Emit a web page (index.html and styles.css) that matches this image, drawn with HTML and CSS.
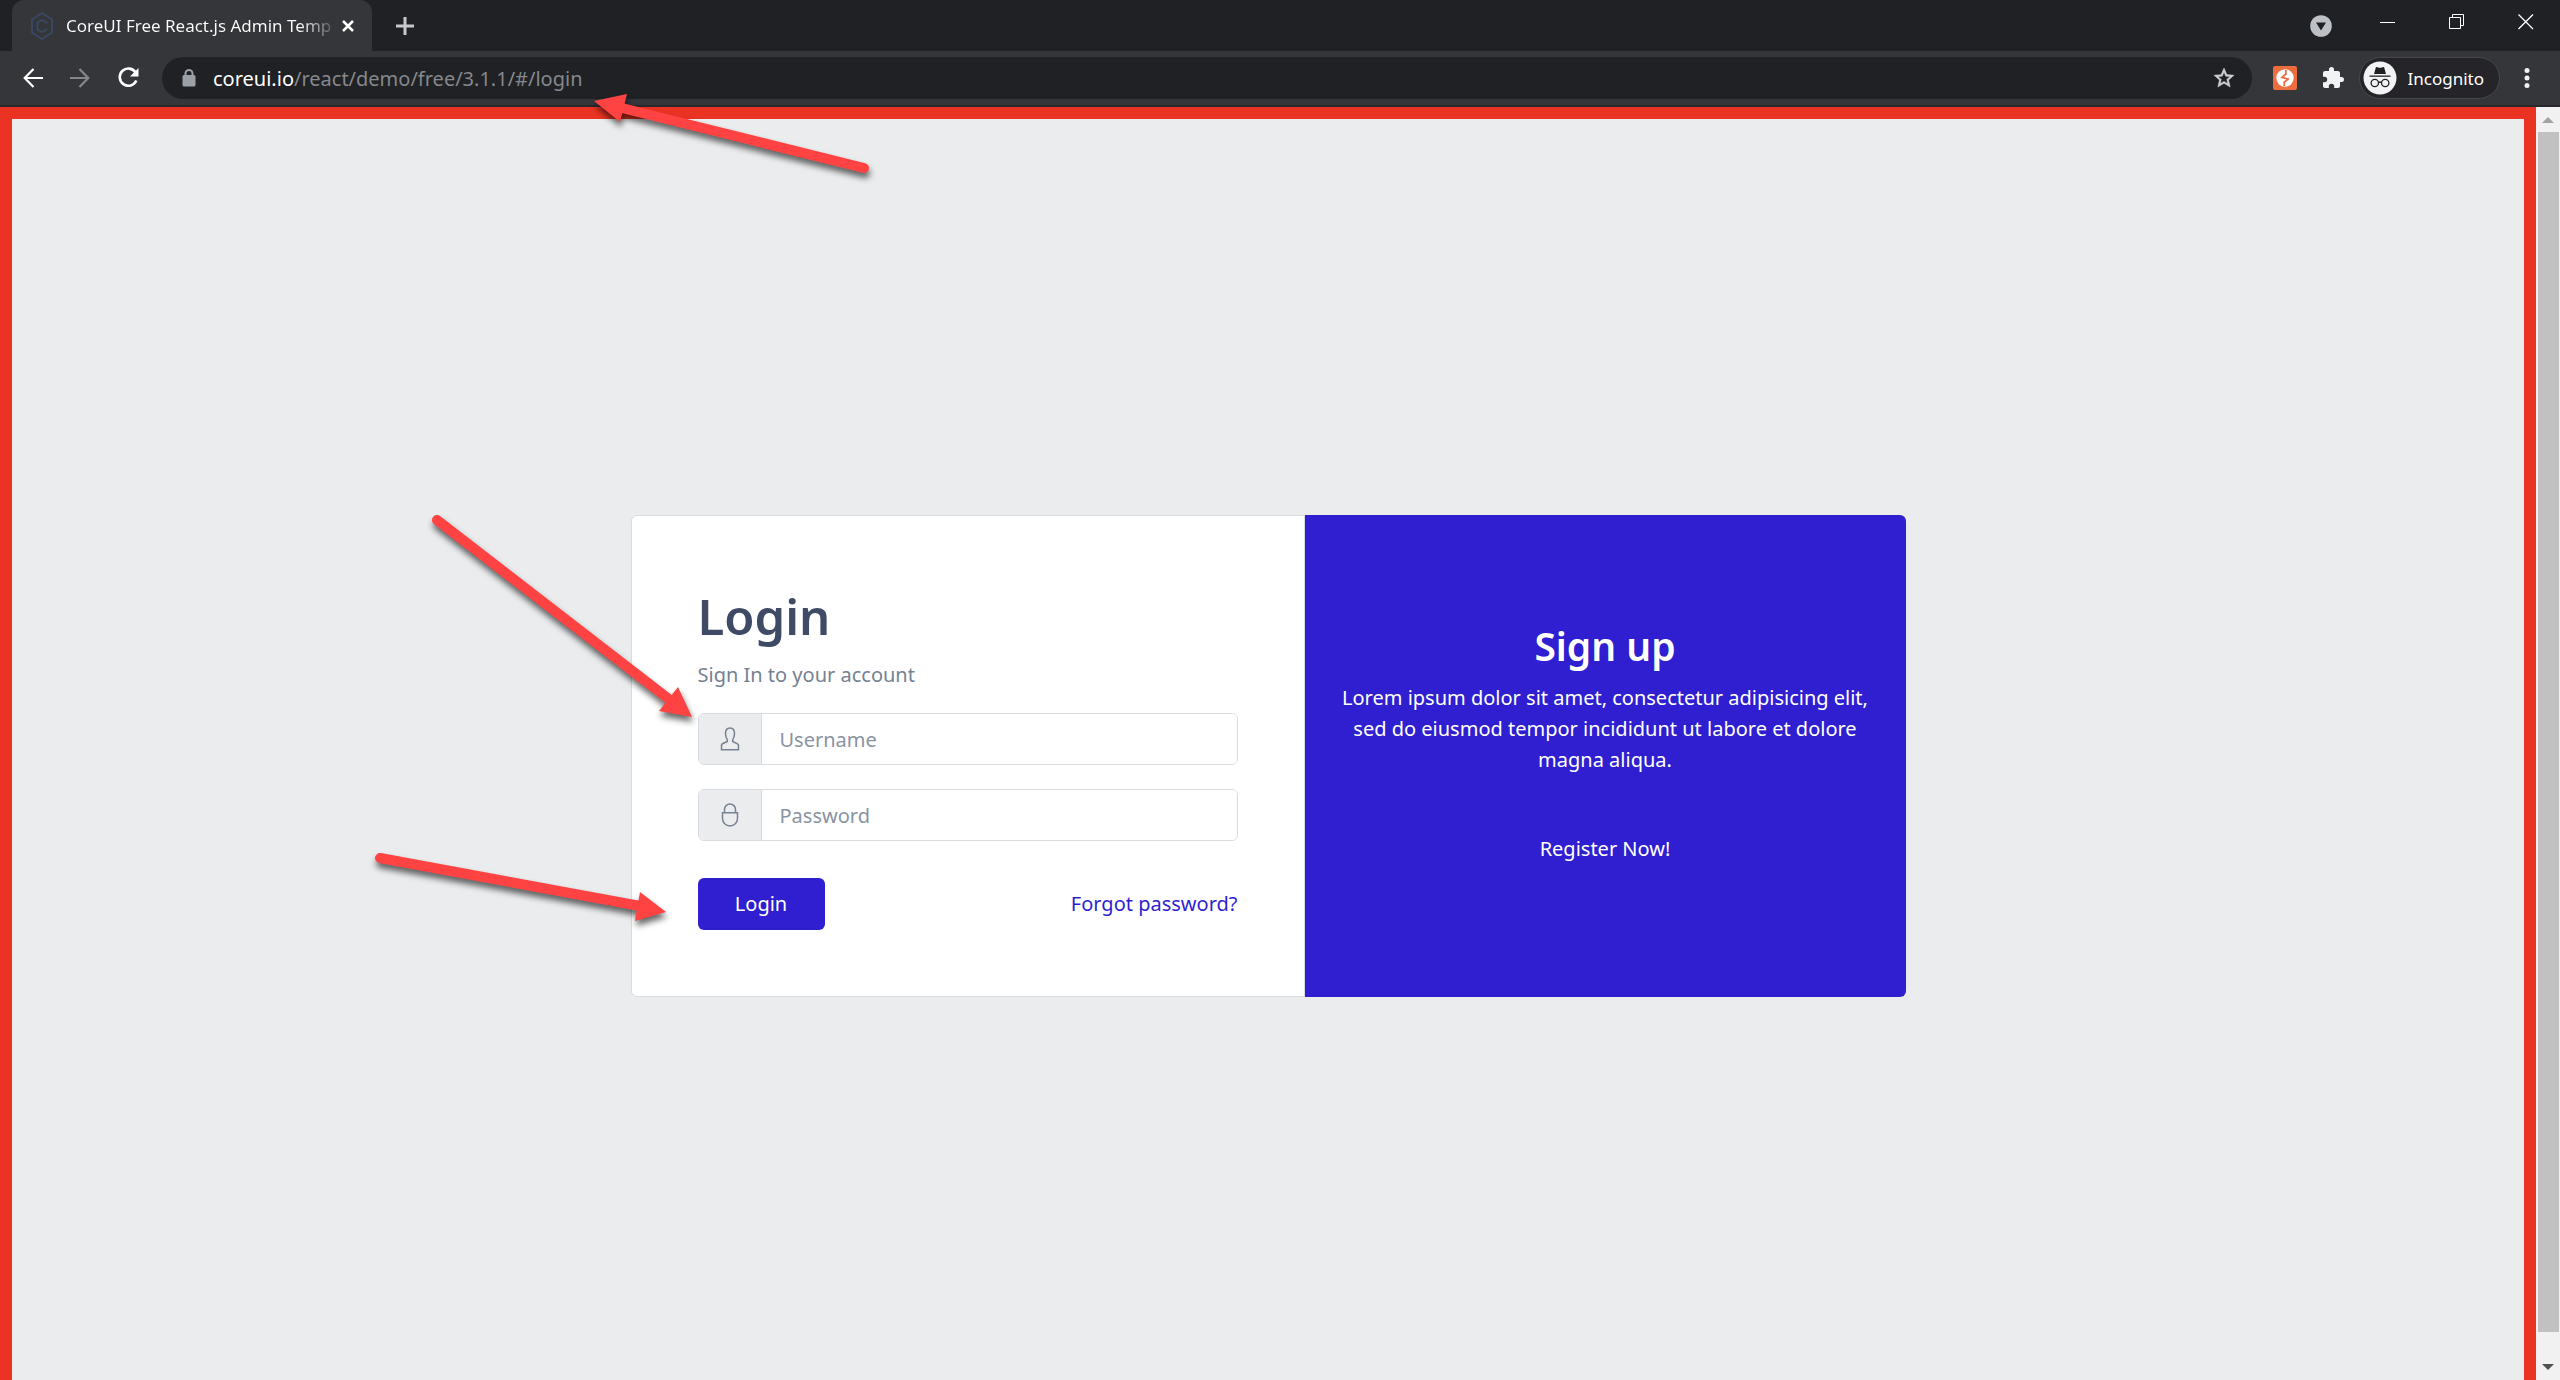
FILE: index.html
```html
<!DOCTYPE html>
<html lang="en">
<head>
<meta charset="utf-8">
<title>CoreUI Free React.js Admin Template</title>
<link rel="stylesheet" href="styles.css">
</head>
<body>
<header class="browser">
  <div class="tab-strip">
    <div class="tab">
      <svg class="favicon" width="24" height="30" viewBox="0 0 24 30" fill="none" stroke="#3a4763" stroke-width="2"><path d="M12 2 22 8.500V21.500L12 28 2 21.500V8.500Z"/><path d="M16.500 12.500V11.500L12 8.800 7.500 11.500V18.500L12 21.200 16.500 18.500V17.500"/></svg>
      <span class="tab-title">CoreUI Free React.js Admin Temp</span>
      <button class="icon-button tab-close" aria-label="Close tab"><svg width="14" height="14" viewBox="0 0 14 14" stroke="#fff" stroke-width="2.500"><path d="M2 2 12 12M12 2 2 12"/></svg></button>
    </div>
    <button class="icon-button new-tab" aria-label="New tab"><svg width="18" height="18" viewBox="0 0 18 18" stroke="#c5c8cc" stroke-width="3"><path d="M9 0V18M0 9H18"/></svg></button>
    <div class="window-controls">
      <button class="icon-button" aria-label="Search tabs"><svg width="22" height="22" viewBox="0 0 22 22"><circle cx="11" cy="11" r="10.800" fill="#bdc1c6"/><path d="M6 7.500H16L11 15.500Z" fill="#202124"/></svg></button>
      <button class="icon-button caption" aria-label="Minimize"><svg width="16" height="16" viewBox="0 0 16 16" stroke="#fff"><path d="M0 8.500H15"/></svg></button>
      <button class="icon-button caption" aria-label="Restore"><svg width="16" height="16" viewBox="0 0 16 16" fill="none" stroke="#fff"><path d="M.5 3.500H11.500V14.500H.5ZM3.500 3.500V.5H14.500V11.500H11.500"/></svg></button>
      <button class="icon-button caption" aria-label="Close"><svg width="16" height="16" viewBox="0 0 16 16" stroke="#fff" stroke-width="1.300"><path d="M.5 .5 15 15M15 .5 .5 15"/></svg></button>
    </div>
  </div>
  <div class="toolbar">
    <nav class="nav-buttons">
      <button class="icon-button" aria-label="Back"><svg width="20" height="20" viewBox="0 0 20 20" fill="none" stroke="#fff" stroke-width="2.200"><path d="M20 10H2M10.500 1 1.700 10 10.500 19"/></svg></button>
      <button class="icon-button" aria-label="Forward"><svg width="20" height="20" viewBox="0 0 20 20" fill="none" stroke="#85878b" stroke-width="2.200"><path d="M0 10H18M9.500 1 18.300 10 9.500 19"/></svg></button>
      <button class="icon-button" aria-label="Reload"><svg width="22" height="22" viewBox="0 0 22 22" fill="none" stroke="#fff" stroke-width="2.600"><path d="M18.800 5.800A8.600 8.600 0 1 0 19.300 13.500"/><path d="M21.500 1V9.500H13Z" fill="#fff" stroke="none"/></svg></button>
    </nav>
    <div class="omnibox">
      <svg width="14" height="18" viewBox="0 0 14 18"><path d="M3.500 7V4.500A3.500 3.500 0 0 1 10.500 4.500V7" fill="none" stroke="#9aa0a6" stroke-width="2"/><rect x=".5" y="6" width="13" height="11.500" rx="1.500" fill="#9aa0a6"/></svg>
      <a class="url" href="#/login"><span class="url-host">coreui.io</span>/react/demo/free/3.1.1/#/login</a>
      <button class="icon-button" aria-label="Bookmark this tab"><svg width="24" height="24" viewBox="0 0 24 24" fill="#d0d2d5"><path d="M22 9.240l-7.190-.62L12 2 9.190 8.630 2 9.240l5.460 4.730L5.820 21 12 17.270 18.180 21l-1.630-7.030L22 9.240zM12 15.400l-3.760 2.270 1-4.280-3.320-2.880 4.380-.38L12 6.100l1.710 4.040 4.380.38-3.320 2.880 1 4.280L12 15.400z" stroke="#d0d2d5" stroke-width=".5"/></svg></button>
    </div>
    <div class="extensions">
      <button class="icon-button" aria-label="Extension"><svg width="24" height="24" viewBox="0 0 24 24"><rect width="24" height="24" rx="2" fill="#ee6d3f"/><circle cx="12" cy="12" r="8.700" fill="#fff"/><path d="M12.800 4V8.200L9 11.300 15 13.200 11.200 16.300V20" fill="none" stroke="#ee6d3f" stroke-width="1.800"/></svg></button>
      <button class="icon-button" aria-label="Extensions"><svg width="24" height="24" viewBox="0 0 24 24" fill="#f1f3f4"><path d="M20.500 11H19V7c0-1.100-.9-2-2-2h-4V3.500a2.500 2.500 0 0 0-5 0V5H4c-1.100 0-2 .9-2 2v3.800h1.500a2.700 2.700 0 0 1 0 5.400H2V20c0 1.100.9 2 2 2h3.800v-1.500a2.700 2.700 0 0 1 5.400 0V22H17c1.100 0 2-.9 2-2v-4h1.500a2.500 2.500 0 0 0 0-5z"/></svg></button>
    </div>
    <button class="profile">
      <svg width="34" height="34" viewBox="0 0 34 34"><circle cx="17" cy="17" r="16.500" fill="#f1f3f4"/><g fill="#202124"><path d="M12.800 6.500Q13 6 13.500 6.100L17 7 20.500 6.100Q21 6 21.200 6.500L23 13H11Z"/><path d="M6.500 14.500H27.500V15.800H6.500Z"/></g><g fill="none" stroke="#202124" stroke-width="1.300"><circle cx="11.800" cy="22" r="3.700"/><circle cx="22.200" cy="22" r="3.700"/><path d="M15.500 21.500Q17 20.500 18.500 21.500"/></g></svg>
      <span>Incognito</span>
    </button>
    <button class="icon-button menu" aria-label="Menu"><svg width="6" height="20" viewBox="0 0 6 20" fill="#f1f3f4"><circle cx="3" cy="2.500" r="2.500"/><circle cx="3" cy="10" r="2.500"/><circle cx="3" cy="17.500" r="2.500"/></svg></button>
  </div>
</header>

<div class="viewport">
  <main class="page">
    <div class="card-group">
      <form class="card login">
        <h1 class="login-title">Login</h1>
        <p class="login-lead">Sign In to your account</p>
        <div class="field">
          <label class="field-icon" for="username" aria-label="Username"><svg width="20" height="24" viewBox="0 0 20 24" fill="none" stroke="#768192" stroke-width="1.500"><path d="M10 1C6.800 1 5.500 3.200 5.500 6.500 5.500 9.200 6.200 11.200 7.300 12.600V14.500L2.500 16.800Q1.500 17.300 1.500 18.500V22.700H18.500V18.500Q18.500 17.300 17.500 16.800L12.700 14.500V12.600C13.800 11.200 14.500 9.200 14.500 6.500 14.500 3.200 13.200 1 10 1Z"/></svg></label>
          <input class="field-input" id="username" type="text" placeholder="Username">
        </div>
        <div class="field">
          <label class="field-icon" for="password" aria-label="Password"><svg width="20" height="24" viewBox="0 0 20 24" fill="none" stroke="#768192" stroke-width="1.500"><path d="M4.500 9.700V6.500A5.500 5.500 0 0 1 15.500 6.500V9.700M2.500 9.700H17.500V15.500A7.500 7.500 0 0 1 2.500 15.500Z"/></svg></label>
          <input class="field-input" id="password" type="password" placeholder="Password">
        </div>
        <div class="actions">
          <button class="login-button" type="button">Login</button>
          <a class="forgot" href="#/forgot">Forgot password?</a>
        </div>
      </form>
      <section class="card signup">
        <h2 class="signup-title">Sign up</h2>
        <p class="signup-text">Lorem ipsum dolor sit amet, consectetur adipisicing elit, sed do eiusmod tempor incididunt ut labore et dolore magna aliqua.</p>
        <a class="register" href="#/register">Register Now!</a>
      </section>
    </div>
  </main>
  <div class="scrollbar">
    <svg width="12" height="6" viewBox="0 0 12 6" fill="#a3a3a3"><path d="M0 6 6 0 12 6Z"/></svg>
    <div class="scroll-thumb"></div>
    <svg width="12" height="6" viewBox="0 0 12 6" fill="#505050"><path d="M0 0H12L6 6Z"/></svg>
  </div>
</div>

<svg class="annotations" aria-hidden="true">
  <g class="arrow"><path class="shaft" d="M864 168 622 108"/><path d="M594 101 627 94 620 122Z"/></g>
  <g class="arrow"><path class="shaft" d="M437 520 670 700"/><path d="M692 717 678 687 659 711Z"/></g>
  <g class="arrow"><path class="shaft" d="M380 858 640 906"/><path d="M666 912 640 892 635 921Z"/></g>
</svg>
</body>
</html>
```
FILE: styles.css
```css
* {
  box-sizing: border-box;
}

body {
  margin: 0;
  height: 100vh;
  display: flex;
  flex-direction: column;
  overflow: hidden;
  font-family: "Noto Sans", "Open Sans", sans-serif;
  font-size: 20px;
  line-height: 31px;
}

h1, h2, p {
  margin: 0;
}

a {
  text-decoration: none;
}

button {
  font: inherit;
  border: 0;
  cursor: pointer;
}

svg {
  display: block;
  flex: none;
}

.icon-button {
  padding: 0;
  background: none;
  display: flex;
  align-items: center;
  justify-content: center;
}

/* Browser chrome */
.browser {
  flex: none;
  background: #35363a;
  border-bottom: 2px solid #28292c;
}

.tab-strip {
  display: flex;
  align-items: center;
  height: 51px;
  padding-left: 12px;
  background: #202124;
}

.tab {
  display: flex;
  align-items: center;
  align-self: stretch;
  width: 360px;
  padding: 0 17px 0 18px;
  background: #35363a;
  border-radius: 12px 12px 0 0;
}

.tab-title {
  flex: 1;
  margin-left: 12px;
  white-space: nowrap;
  font-size: 17px;
  color: transparent;
  background: linear-gradient(to right, #fff 85%, #55565a 97%);
  background-clip: text;
}

.new-tab {
  margin-left: 24px;
}

.window-controls {
  display: flex;
  align-items: center;
  align-self: stretch;
  margin-left: auto;
}

.caption {
  width: 69px;
  height: 44px;
  align-self: flex-start;
}

.window-controls .icon-button:first-child {
  margin-right: 21px;
}

.toolbar {
  display: flex;
  align-items: center;
  height: 54px;
  padding: 0 30px 0 23px;
}

.nav-buttons {
  display: flex;
  gap: 27px;
  margin-right: 23px;
}

.omnibox {
  flex: 1;
  display: flex;
  align-items: center;
  height: 42px;
  padding: 0 16px 0 20px;
  border-radius: 21px;
  background: #202124;
}

.url {
  flex: 1;
  margin-left: 17px;
  color: #85888c;
}

.url-host {
  color: #fff;
}

.extensions {
  display: flex;
  gap: 24px;
  margin: 0 14px 0 21px;
}

.profile {
  display: flex;
  align-items: center;
  gap: 11px;
  height: 42px;
  padding: 0 15px 0 3px;
  border: 1px solid #46474b;
  border-radius: 21px;
  background: #252529;
  color: #fff;
  font-size: 17px;
}

.menu {
  margin-left: 24px;
}

/* Page area */
.viewport {
  flex: 1;
  min-height: 0;
  display: flex;
}

.page {
  flex: 1;
  display: flex;
  align-items: center;
  justify-content: center;
  padding-top: 12px;
  border: 12px solid #ea3323;
  border-bottom: 0;
  background: #ebecee;
}

.scrollbar {
  width: 24px;
  display: flex;
  flex-direction: column;
  align-items: center;
  gap: 9px;
  padding: 10px 0;
  background: #f1f1f1;
}

.scroll-thumb {
  width: 21px;
  flex: 1;
  margin-bottom: 23px;
  background: #c1c1c1;
}

/* Login and sign-up cards */
.card-group {
  display: grid;
  grid-template-columns: 674fr 601fr;
  width: 1275px;
  max-width: 100%;
}

.card {
  display: flex;
  flex-direction: column;
}

.login {
  padding: 66px;
  background: #fff;
  border: 1px solid #d8dbe0;
  border-radius: 6px 0 0 6px;
}

.login-title {
  margin-bottom: 9px;
  font-size: 49px;
  line-height: 68px;
  font-weight: 600;
  color: #3f4a64;
}

.login-lead {
  margin-bottom: 23px;
  color: #768192;
}

.field {
  display: flex;
  height: 52px;
  margin-bottom: 24px;
  border: 1px solid #d8dbe0;
  border-radius: 6px;
  overflow: hidden;
}

.field-icon {
  display: flex;
  align-items: center;
  justify-content: center;
  width: 63px;
  background: #ebecee;
  border-right: 1px solid #d8dbe0;
}

.field-input {
  flex: 1;
  padding: 2px 18px 0;
  border: 0;
  outline: 0;
  font: inherit;
  color: #5c6873;
}

.field-input::placeholder {
  color: #8a93a2;
  opacity: 1;
}

.actions {
  display: flex;
  align-items: center;
  justify-content: space-between;
  margin-top: 13px;
}

.login-button {
  height: 52px;
  width: 127px;
  border-radius: 6px;
  background: #2f1fd0;
  color: #fff;
}

.forgot {
  color: #2f1fd0;
}

.signup {
  align-items: center;
  padding: 104px 36px 0;
  background: #2f1fd0;
  border-radius: 0 6px 6px 0;
  color: #fff;
  text-align: center;
}

.signup-title {
  margin-bottom: 9px;
  font-size: 39px;
  line-height: 54px;
  font-weight: 600;
}

.register {
  margin-top: 58px;
  color: #fff;
}

/* Pointer arrows drawn over everything */
.annotations {
  position: absolute;
  top: 0;
  left: 0;
  width: 100%;
  height: 100%;
  pointer-events: none;
}

.arrow {
  fill: #ff4242;
  filter: drop-shadow(1px 5px 3px rgba(0, 0, 0, 0.6));
}

.shaft {
  stroke: #ff4242;
  stroke-width: 10px;
  stroke-linecap: round;
}
```
